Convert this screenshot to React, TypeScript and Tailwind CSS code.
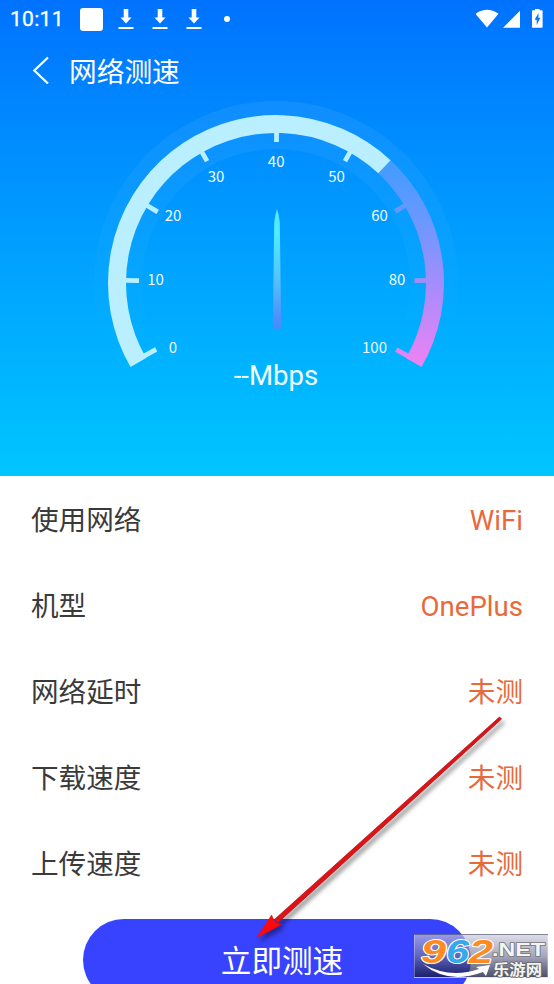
import React from 'react';

const TICKS = [
  { label: '0', x: 173, y: 347, angle: 151, inner: 137 },
  { label: '10', x: 155.5, y: 279, angle: 181, inner: 137 },
  { label: '20', x: 173, y: 215, angle: 211, inner: 138 },
  { label: '30', x: 216, y: 176, angle: 240.5, inner: 140 },
  { label: '40', x: 276.2, y: 161, angle: 270.2, inner: 141 },
  { label: '50', x: 336.5, y: 176, angle: 299.5, inner: 140 },
  { label: '60', x: 379.5, y: 215, angle: 329, inner: 139 },
  { label: '80', x: 397, y: 279, angle: 359, inner: 138.5 },
  { label: '100', x: 374.5, y: 347, angle: 29, inner: 137.5 },
];

const ROWS = [
  { label: '使用网络', value: 'WiFi' },
  { label: '机型', value: 'OnePlus' },
  { label: '网络延时', value: '未测' },
  { label: '下载速度', value: '未测' },
  { label: '上传速度', value: '未测' },
];

const CX = 276;
const CY = 283;

function polar(radius: number, angle: number) {
  const rad = (angle * Math.PI) / 180;
  return [CX + radius * Math.cos(rad), CY + radius * Math.sin(rad)];
}

function arc(radius: number, from: number, to: number) {
  const [x1, y1] = polar(radius, from);
  const [x2, y2] = polar(radius, to);
  const large = to - from > 180 ? 1 : 0;
  return `M${x1} ${y1}A${radius} ${radius} 0 ${large} 1 ${x2} ${y2}`;
}

function DownloadIcon() {
  return (
    <svg width="16" height="22" viewBox="0 0 16 22" fill="#fff">
      <path d="M5.7 1h4.6v8.4h3.2L8 15.4 2.5 9.4h3.2zM.5 19h15v2H.5z" />
    </svg>
  );
}

function StatusBar() {
  return (
    <div className="flex h-9 items-center pl-2.5 pr-2 pt-0.5 text-white">
      <span className="w-[54px] text-[21px] leading-none tracking-[0.3px] [-webkit-text-stroke:0.3px_#fff]">10:11</span>
      <div className="ml-4 size-[23px] rounded-[3px] bg-white" />
      <div className="ml-[15px] flex gap-[18px]">
        <DownloadIcon />
        <DownloadIcon />
        <DownloadIcon />
      </div>
      <div className="ml-[22px] size-1.5 rounded-full bg-white" />
      <svg className="-mt-px ml-auto" width="70" height="20" viewBox="0 0 70 20" fill="#fff">
        <path d="M-.5 4.8Q11-3.4 22.5 4.8L11 18.6zM44 1.8v17H27z" />
        <path d="M59 1.2V-.4h4.6v1.6h2.2q.8 0 .8.8v16q0 .8-.8.8h-9q-.8 0-.8-.8V2q0-.8.8-.8z" />
        <path d="M62.6 4 58.5 10.8h2.2v5.2l3.7-7.3h-2z" fill="#0878f5" />
      </svg>
    </div>
  );
}

function Gauge() {
  return (
    <svg className="-mt-[105px] block" width="554" height="400" viewBox="0 0 554 400" fill="none">
      <defs>
        <linearGradient id="high" gradientUnits="userSpaceOnUse" x1="0" y1="160" x2="0" y2="366">
          <stop stopColor="#3f9cff" />
          <stop offset="0.3" stopColor="#6b98ff" />
          <stop offset="0.6" stopColor="#a48dfb" />
          <stop offset="1" stopColor="#ee82f3" />
        </linearGradient>
        <linearGradient id="halo" gradientUnits="userSpaceOnUse" x1="0" y1="100" x2="0" y2="340">
          <stop stopColor="#fff" stopOpacity="0.065" />
          <stop offset="1" stopColor="#fff" stopOpacity="0" />
        </linearGradient>
        <linearGradient id="needle" gradientUnits="userSpaceOnUse" x1="0" y1="209" x2="0" y2="330">
          <stop stopColor="#56e6ff" />
          <stop offset="0.2" stopColor="#4fecff" />
          <stop offset="0.6" stopColor="#55c0fb" />
          <stop offset="0.9" stopColor="#4f8ffb" />
          <stop offset="1" stopColor="#438cfb" />
        </linearGradient>
      </defs>
      <path d={arc(158, 150, 390)} stroke="url(#halo)" strokeWidth="48" />
      <path d={arc(159, 313, 390)} stroke="url(#high)" strokeWidth="18" />
      <path d={arc(159, 150, 313)} stroke="#b9efff" strokeWidth="18" />
      {TICKS.map(({ label, x, y, angle, inner }) => {
        const [x1, y1] = polar(151, angle);
        const [x2, y2] = polar(inner, angle);
        const isHigh = angle > 313 || angle < 90;
        return (
          <g key={label}>
            <path d={`M${x1} ${y1}L${x2} ${y2}`} stroke={isHigh ? 'url(#high)' : '#b9efff'} strokeWidth="4.8" />
            <text
              x={x}
              y={y + 5.5}
              textAnchor="middle"
              className="fill-[#effcff] font-['Noto_Sans_CJK_SC',sans-serif] text-[15px]"
            >
              {label}
            </text>
          </g>
        );
      })}
      <path d="M277 209Q279.4 216 279.8 223L281.2 327.5Q277 332 272.8 327.5L274.2 223Q274.6 216 277 209z" fill="url(#needle)" />
      <text x="276" y="385" textAnchor="middle" className="fill-[#f2fdff] text-[27.6px]">
        --Mbps
      </text>
    </svg>
  );
}

function PointerArrow() {
  return (
    <svg
      className="pointer-events-none absolute left-[240px] top-[700px] drop-shadow-[3px_4px_2px_rgba(0,0,0,0.4)]"
      width="280"
      height="250"
      viewBox="240 700 280 250"
    >
      <path d="M499.5 717 501.5 719 277.5 923 274.5 919.5z" fill="#e01216" stroke="#a51418" strokeWidth="0.8" />
      <path d="M256.5 938 271.6 915 274 920.5 277.5 923.5 281.5 924.5z" fill="#ff080c" stroke="#d41014" strokeWidth="0.5" />
    </svg>
  );
}

function Watermark() {
  return (
    <div className="absolute left-[414px] top-[934px] h-11 w-[134px] border border-white/30 bg-linear-to-b from-[#c9c9dd]/65 via-[#77779a]/65 to-[#14143a]/75">
      <svg className="-ml-px -mt-px block overflow-visible" width="134" height="44" viewBox="0 0 134 44">
        <g
          className="font-['Liberation_Sans',sans-serif] text-[34px] font-bold italic"
          stroke="#fff"
          strokeWidth="2"
          strokeLinejoin="round"
          paintOrder="stroke"
        >
          <text x="7" y="28.5" fill="#ff8a1f" textLength="25" lengthAdjust="spacingAndGlyphs">9</text>
          <text x="32" y="28.5" fill="#35a9ea" textLength="23" lengthAdjust="spacingAndGlyphs">6</text>
          <text x="55" y="28.5" fill="#ff8a1f" textLength="24" lengthAdjust="spacingAndGlyphs">2</text>
        </g>
        <text
          x="78"
          y="22"
          textLength="53"
          lengthAdjust="spacingAndGlyphs"
          className="font-['Liberation_Sans',sans-serif] text-[18px] font-bold"
          fill="#f4f4f4"
          stroke="#777"
          strokeWidth="1.5"
          paintOrder="stroke"
        >
          .NET
        </text>
        <text
          x="79"
          y="41"
          textLength="49"
          lengthAdjust="spacingAndGlyphs"
          className="font-['Noto_Sans_CJK_SC',sans-serif] text-[15px] font-bold"
          fill="#f4f4f4"
          stroke="#666"
          strokeWidth="1.5"
          paintOrder="stroke"
        >
          乐游网
        </text>
        <path d="M9 30Q36 45 65 35L62 33 76 31 72 42 69 38Q34 51 9 30z" fill="#fff" />
      </svg>
    </div>
  );
}

export default function App() {
  return (
    <div className="relative h-[984px] w-[554px] overflow-hidden bg-white font-[Roboto,'Noto_Sans_CJK_SC',sans-serif]">
      <header className="h-[476px] bg-linear-to-b from-[#0072ff] to-[#00c6ff]">
        <StatusBar />
        <div className="flex h-[69px] items-center pl-8 text-white">
          <svg className="-mt-px" width="18" height="28" viewBox="0 0 18 28" fill="none" stroke="#fff" strokeWidth="2.2">
            <path d="M16 1.5 2.3 14.5 16 27.5" />
          </svg>
          <h1 className="ml-[19px] pt-[5px] text-[27.7px] leading-none">网络测速</h1>
        </div>
        <Gauge />
      </header>

      <main>
        {ROWS.map((row) => (
          <div key={row.label} className="flex h-[86px] items-center justify-between pl-[31px] pr-[31px] pt-1 text-[27.6px]">
            <span className="text-[#3a3a3a]">{row.label}</span>
            <span className="text-[#e8693a]">{row.value}</span>
          </div>
        ))}
        <button className="mx-auto mt-[13px] flex h-[82px] w-[388px] items-center justify-center rounded-full bg-[#3843ff] pl-2.5 pt-1 text-[30.6px] text-white">
          立即测速
        </button>
      </main>

      <PointerArrow />
      <Watermark />
    </div>
  );
}
